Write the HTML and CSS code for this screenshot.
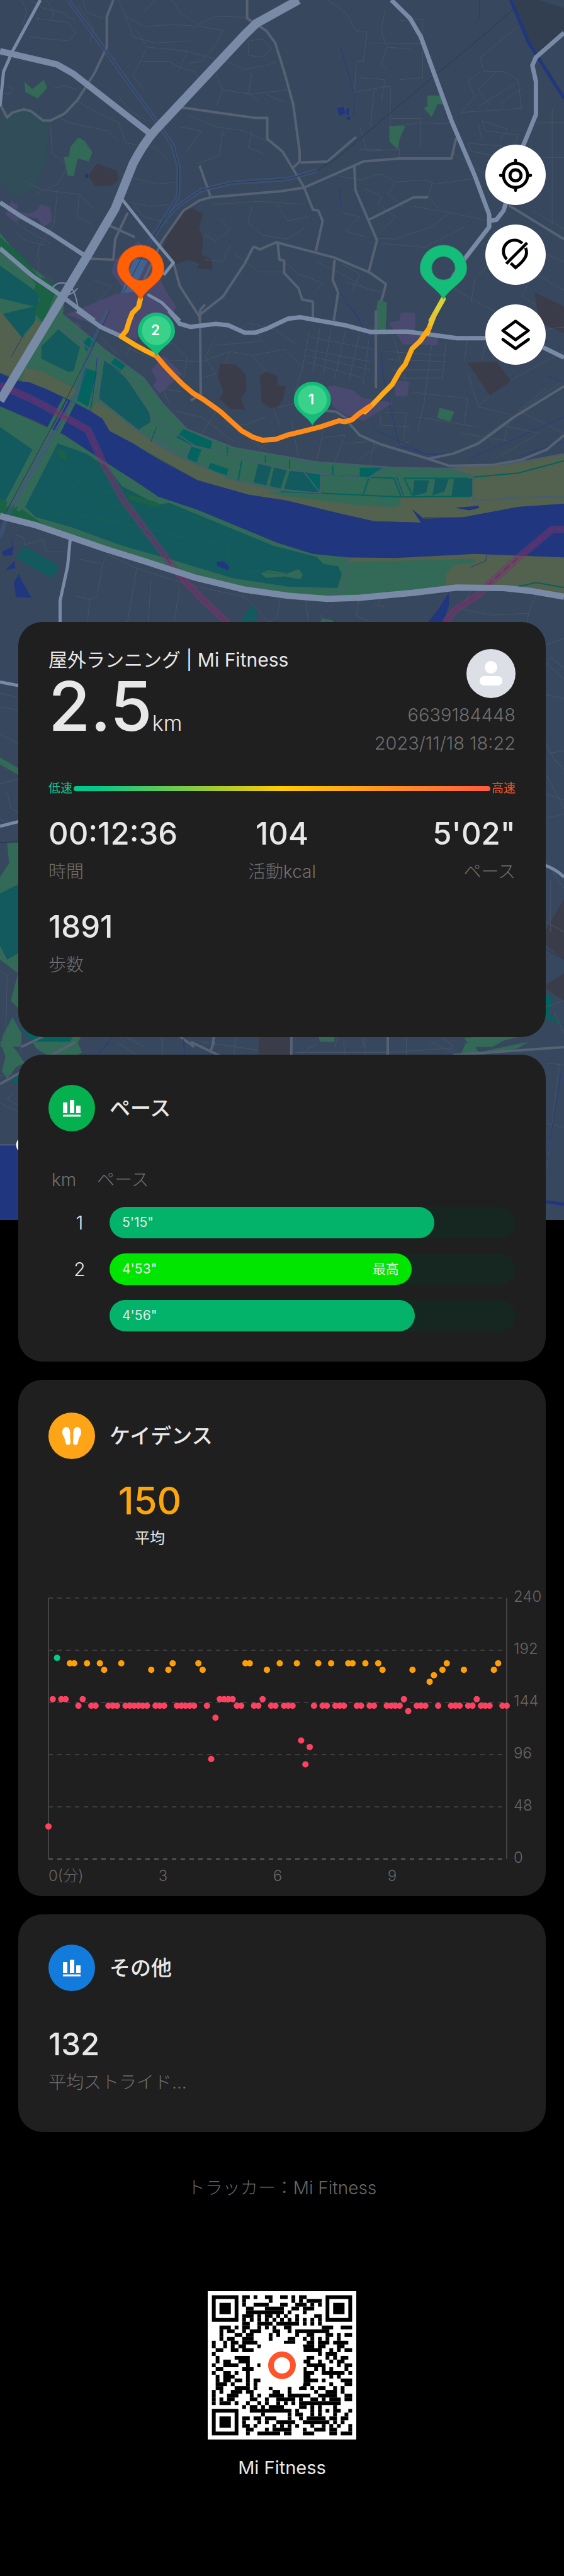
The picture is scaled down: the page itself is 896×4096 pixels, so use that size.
FILE: index.html
```html
<!DOCTYPE html>
<html lang="ja">
<head>
<meta charset="utf-8">
<meta name="viewport" content="width=device-width, initial-scale=1">
<title>屋外ランニング | Mi Fitness</title>
<link rel="stylesheet" href="styles.css">
</head>
<body>
<main class="page">
  <svg class="map" viewBox="0 0 1125 2436" role="img" aria-label="ランニングルートの地図">
    <rect class="land" width="1125" height="2436"/>

    <!-- northern town -->
    <g transform="scale(.7175 .4082)">
      <path class="forest" d="M10 560Q70 500 135 580L130 790L95 920L40 970L0 890V600Z"/>
      <path class="grass" d="M68 400L90 435L122 390L131 430L105 482L70 450ZM218 672L236 690L257 745L247 790L216 775L205 862L188 858L177 768L192 765L195 720ZM1188 467H1228L1236 512L1217 508L1200 572L1178 530L1188 520ZM1082 615H1127L1112 675L1106 730L1090 705L1082 690Z"/>
      <path class="dark" d="M270 800L325 835L330 880L310 908L265 912L245 860ZM535 1018L565 1045L553 1110L565 1170L560 1245L590 1270V1320L548 1310L555 1290L525 1270L485 1295L450 1230L470 1130L505 1035Z"/>
      <path class="shade" d="M1428 0H1500L1568 40V170L1495 260L1470 200L1440 90Z"/>
      <path class="block" d="M30 990L50 1000L48 1030L80 1045L100 1030L115 1000L140 1015L144 1085L120 1110L105 1070L75 1060L40 1085L15 1050ZM385 1180L400 1200L460 1420L490 1500L470 1568H330L350 1430L310 1330L320 1270Z"/>
      <path class="street" d="M60 0L75 60L60 130M85 0L120 40L170 60L210 100M100 90L190 110L210 160L190 200L80 180M130 0L150 60L140 100M230 0L240 60L290 90M220 30L260 140L250 210M330 0L350 80L400 130L480 120L560 130L620 150M350 80L370 180L430 210L530 200M400 60L430 0M480 0L500 60L550 120L600 80L690 85M380 150L410 230L520 250L600 290M410 230L390 300L370 370L400 440M520 250L500 330L540 350L560 400M390 300L470 300L500 330M620 150L600 220L560 300L520 310M690 200L730 190L755 240L730 280L690 270ZM630 300L680 340L740 320L770 300M600 360L620 440L700 460L800 440M620 440L600 520M700 360L690 450L720 500M740 460L790 500M20 420L35 430L30 455L0 460M150 430L180 420L215 440M160 570L190 600L300 640L330 690M220 500L270 550L330 600L350 700M330 470L360 540L410 590M140 600L145 750L190 810L160 900L100 950M60 880L120 930L220 950L260 1020M160 930L150 1100L110 1200L100 1290M220 950L215 1060L260 1100M30 970L50 1100L140 1190M350 700L430 720L470 790M370 870L440 900L490 890M360 990L420 1010L470 1000M520 560L600 620L680 640L740 690M500 620L560 640L520 740M620 640L610 760L550 800M700 640L690 720L740 760M590 1000L720 985L850 1000M610 1070L640 1120L600 1180L570 1150M700 1010L690 1090L730 1150L800 1170M770 1000L800 1080L860 1060M640 1200L620 1280L570 1270M800 1170L850 1110"/>
      <path class="street" d="M910 0L960 60L990 150L1020 155L1010 300L990 300L985 470M1070 50L1060 150L1075 230L1060 310L1080 350M1110 100L1175 95V380L1110 390M1030 210L1180 215M1075 230L1140 240M990 450L1085 420V620L1170 600M1040 430L1030 620M1000 380L1070 390L1060 500M1090 580H1170V730M1000 620L1020 740L1110 730V770M1170 600L1230 605L1260 600M1000 730L1060 730M1335 280L1345 350L1400 350L1440 390L1450 530L1280 550M1335 350L1300 400L1320 470L1280 560M1380 350L1330 440L1360 510M1440 400L1330 520M1450 430L1390 510L1400 530M1340 590L1350 640L1440 660L1430 720L1300 700M1340 590L1410 630L1390 690M1300 700L1310 740L1370 760L1360 830L1450 900M1440 130L1330 290M1490 600H1568M1510 770H1568M1390 700L1395 830M940 860L1000 880L1060 850L1100 890L1180 880L1210 900L1330 870M1010 920L1060 960L1050 1010M1100 890L1080 950L1120 1010M1200 900L1190 960L1220 1020M1060 1010L1100 1060L1060 1130M1150 1010L1250 1040L1360 1080M1250 1040L1200 1110L1100 1170L1040 1165M950 1040L1000 1060L960 1130L1020 1160M1290 1110L1180 1210L1060 1190M1370 1130L1568 1280M1340 1190L1568 1420M1400 1230L1480 1350L1450 1450L1560 1560M1380 1260L1320 1360L1310 1480M1240 1390L1330 1480L1420 1568M1480 1030L1568 1120M1535 530V1100M880 1280L940 1330L1010 1400M950 1290L1000 1340L980 1420M960 1380L1060 1430M900 1380L870 1440M790 1280L830 1340L890 1380M650 1240L720 1330L790 1330M110 1260L105 1330L150 1380M40 1130L75 1180L130 1200M260 1370L310 1400L270 1480M370 1000L400 1060L470 1090M1330 600L1340 690M1260 750L1390 900"/>
      <path class="road" d="M315 0L297 80V230L262 360L215 490L180 555L140 590H120L85 542L65 535L35 550L20 575L0 510M687 0V90L740 150L765 210L790 350L815 510L833 740V790L815 820M505 525L600 550L710 577H743V680L785 740L845 915L870 1025L885 1030L897 1080L878 1228M835 795L910 790L990 670M585 965L780 935L845 918L1010 790L1110 775H1255L1268 675M585 965L555 980L510 1030L450 1180L400 1370M985 810L988 930L1048 1175L1025 1330M1025 1075L1150 965H1190M705 1205L722 1220L768 1185L930 1260L1030 1335L1073 1390L1045 1568M705 1205L680 1290L620 1450L555 1540M772 1190L777 1270L790 1275V1335L830 1410L840 1465L870 1475V1568M930 1270L925 1370L940 1430L928 1568M482 1285L500 1400L555 1550V1568M1415 1005L1568 1170M555 810L585 960M250 1265L315 1270L320 1170L355 1040M300 1100L375 1160"/>
      <path class="stream" d="M947 230L985 460L983 560M942 915L948 1020M1333 0V90M940 1420L1000 1568"/>
      <path class="canal" d="M1420 0L1470 210L1510 320L1568 480"/>
      <path class="water" d="M937 530L955 522L960 555L944 566ZM963 530H970V562H963ZM963 575L970 568L976 582L965 588ZM237 850H245V870H236Z"/>
      <path class="rail-bed" d="M190 0L290 240L400 510L440 605L480 710L497 820L495 960L460 1060L425 1165M880 835L800 875L640 895L560 930L500 1000L460 1070L420 1170L350 1410L290 1568"/>
      <path class="station" d="M372 1265L410 1275L350 1505L325 1490Z"/>
      <path class="rail" d="M190 0L290 240L400 510L440 605L480 710L497 820L495 960L460 1060L425 1165M1455 0L1340 180L1215 360L1050 605L940 770L880 835L800 875L640 895L560 930L500 1000L460 1070L420 1170L350 1410L290 1568"/>
      <path class="main-road w6" d="M112 0L35 250L10 350L0 520M335 965L425 1165L482 1285L455 1345M410 1440L450 1480L500 1568"/>
      <path class="main-road w8" d="M1088 0L1140 90L1170 180L1205 350L1255 590L1320 860L1360 1050V1110L1290 1270L1230 1440M1568 160L1490 280L1480 320L1490 400V560L1455 710L1400 1030L1380 1075L1362 1080M0 990L60 1060L140 1140L240 1255"/>
    </g>

    <!-- river and parks -->
    <g transform="translate(0 620) scale(.7175 .4082)">
      <path class="grass" d="M0 -380L60 -250L125 -160L180 -70L175 20L290 190L400 330L450 450L520 580L650 670L880 740L1100 768L1250 772L1400 755L1568 700V945L1440 960L1290 1010H1180L1040 1030L800 930L550 830L305 590L190 435L0 305Z"/>
      <path class="grass" d="M0 468L180 610L390 850L550 975L770 1135L870 1190L970 1207L1320 1190L1568 1207V1400L1400 1355H1270L1080 1400L910 1410L680 1365L400 1225L100 1050L0 1005Z"/>
      <path class="park" d="M0 -290L50 -200L110 -70L95 60L60 130L0 80Z"/>
      <path class="forest-deep" d="M0 -360L70 -250L110 -160L125 -160L160 -110L120 60L95 10L112 -60L60 -200L0 -310Z"/>
      <path class="grass" d="M0 -320L100 -130L95 -100L0 -220ZM0 -60L95 -20L0 20Z"/>
      <path class="scrub" d="M0 0L65 140L100 45L118 70L45 330L0 305ZM70 280L120 300L215 390L190 435L130 385L60 345ZM270 445L300 480L420 640L500 720L650 830L780 885L1000 905H1310L1320 810L1250 772L1400 755L1568 700V945L1440 960L1290 1010H1180L1170 1037L1040 1030L950 995L800 930L690 900L550 830L370 650L305 590L250 490Z"/>
      <path class="grass" d="M740 885L1110 915L1115 950L1090 963L990 950L780 905ZM1310 805L1250 772L1030 770L900 900L1310 908Z"/>
      <path class="park" d="M162 92L222 180L205 295L190 300L115 235V175ZM290 240L350 330L415 500L418 545L385 583L275 430ZM718 750L755 765L740 855L705 840ZM762 768L797 782L780 870L750 857ZM805 785L845 790L880 890L790 872ZM1152 830H1193L1185 890L1147 908ZM1210 825H1247L1235 885L1202 905ZM1262 825L1313 822V905L1255 910Z"/>
      <path class="turf" d="M250 120L270 150L240 200L230 160ZM320 230L350 265L335 300L305 265ZM235 280L270 300L245 470L215 440ZM510 580L590 640L585 680L530 655L490 620ZM530 665L560 680L545 750L520 725ZM585 745L635 775L630 805L578 775ZM845 790L890 800L888 890L870 880ZM1000 770L1065 768L1030 815L1000 808Z"/>
      <path class="park" d="M160 650L240 700L300 770L340 860L440 950L470 940L760 1150L880 1205L900 1240L940 1250L950 1290L938 1357L800 1350L650 1310L480 1220L340 1150L200 1060L100 1010L70 960ZM0 570L90 680L15 930L0 920Z"/>
      <path class="wood" d="M155 675L180 690L190 740L165 715ZM350 895L440 940V965L360 925ZM0 920L60 970L120 1045L0 985Z"/>
      <path class="grass" d="M725 1285L745 1270L800 1285L830 1265L842 1290L835 1315L790 1300L740 1308Z"/>
      <path class="scrub" d="M965 1210L1320 1190L1568 1207V1400L1400 1355H1240V1290L1260 1245L1320 1235V1215L970 1230Z"/>
      <path class="park" d="M65 1150L165 1250L145 1310L45 1210ZM700 1440L718 1480L700 1568H650Z"/>
      <path class="water" d="M0 305L40 345L80 350L130 385L190 435L250 490L285 530L305 590L370 650L450 740L550 830L690 900L800 930L950 995L1040 1030L1170 1037L1130 930L1145 970L1180 1020L1290 1010L1440 960L1568 945V1207L1320 1190L1100 1210L970 1207L870 1190L770 1135L550 975L440 910L390 850L270 715L180 610L100 540L0 468ZM5 1180L35 1155V1195L10 1200ZM15 1270L40 1225L43 1260ZM38 1330L52 1290L60 1320L88 1405L45 1400ZM602 1230L620 1225L637 1250L635 1270L605 1250ZM1248 1380V1440L1225 1568H1170L1215 1470ZM1265 965L1330 955L1333 965L1305 977Z"/>
      <path class="dark" d="M612 260L655 265L683 310L685 390L670 430L682 485L640 480L610 430L622 400L605 320ZM740 297L770 320L772 365L795 370L785 440L765 490L728 450L722 320ZM1300 255L1380 250L1420 345L1362 415ZM1485 -90L1568 -20V110L1500 60Z"/>
      <path class="block" d="M455 220L508 310L480 350L445 405L425 370L435 340L420 290ZM910 370L935 370L980 390L1010 430L1095 450L1010 540L960 510L925 470ZM1095 340L1138 350L1132 420L1100 420ZM1080 60L1110 50L1115 10H1155V120L1217 130V170L1120 165ZM185 20L320 -80L400 -100L420 0L380 140L340 130L300 90ZM205 50L230 80L215 80Z"/>
      <path class="grass" d="M1050 -50L1076 -40L1072 95L1040 90ZM1222 475L1263 495L1252 542L1215 525ZM895 1505L925 1515V1568H880Z"/>
      <path class="street" d="M350 180L430 240L560 250M380 130L350 220M440 180L480 160L520 230L510 330M560 250L640 200L700 220L790 190L850 290M600 130L570 230L600 310L560 330M600 170L730 150L700 80M640 200L625 260M660 100L690 60L760 90L820 160M700 220L740 300M850 190L1030 250M850 220L1030 290M860 130L1040 190M850 250L1010 330M860 100L840 290L820 400M890 80L870 300M920 90L900 310M960 100L930 330M1000 110L970 340M1030 80L1010 360M1070 200L1240 220M1080 240L1240 250M1090 290L1230 290M1100 330L1230 330M1090 100L1130 360M1200 170L1180 440L1160 600M1240 140L1230 340M1150 400L1300 430L1290 560M1160 520L1330 570M780 570L760 480L850 440M740 520L680 560L620 540M810 540L830 720M850 600L900 580L880 740M900 620L960 610L930 740M960 650L1040 640L1030 740M1050 440L1060 560L1140 570M1070 500L1130 500L1120 640M1000 610L1050 660L990 740M1140 640L1100 660M560 440L600 500L560 600M480 490L560 520L650 640M700 640L750 690M770 620L720 680M1300 300L1330 470L1420 510L1400 640M1360 420L1330 470M1280 600L1420 640M1420 340L1568 200M1568 340L1320 650M1520 380L1440 490L1568 600M1390 560L1500 600L1380 720M1300 140L1290 250M1350 150L1340 240M1420 200L1480 100L1568 80M330 220L280 130M470 450L450 380L510 400"/>
      <path class="street" d="M40 1095L65 1110L70 1145L120 1120L130 1180H185M220 1215L285 1240L300 1195L380 1260L520 1340L680 1400L740 1510L760 1568M285 1240L270 1400L250 1410L240 1568M380 1260L350 1568M210 1395L250 1415M500 1350L480 1568M780 1400L770 1500L700 1568M850 1410L860 1568M940 1410L890 1500L960 1568M1000 1400L990 1490L1080 1568M1060 1400L1050 1440L1070 1450M1310 1370L1280 1460L1370 1490L1470 1480L1460 1568M1490 1390L1470 1480M420 1310L410 1568"/>
      <path class="teal-line" d="M632 665V710M738 710V750M805 730V780M672 735L662 835M925 757V803M1025 820L1010 900M892 803L1095 820L1115 910M1120 820H1300M1125 825L1147 905M780 885L1115 912L1310 908M1315 815L1440 795L1568 735M1440 1350L1490 1330L1568 1355"/>
      <path class="trail" d="M175 20L290 190L400 330L450 450L520 580L650 670L880 740L1100 768L1250 772L1400 755L1568 700M150 60L250 190L290 240L360 320L430 530L540 660L800 775L892 800V892L780 880L640 825L440 660L275 440V230L205 120M892 800L1025 818L1065 770M1310 805L1250 772M1315 805V930L1500 910L1568 912M830 730L880 775L892 800M430 640L470 690L530 665L515 730M890 890L845 790M970 1215L955 1370L910 1395"/>
      <path class="park-path" d="M150 830L90 970L200 1000L350 1040L480 1100L640 1150L630 1200L660 1270L800 1290M170 740L180 800L280 880L380 930L350 1040M190 850L330 960L480 960L640 1100"/>
      <ellipse class="trail" cx="456" cy="640" rx="12" ry="22"/>
      <path class="stream" d="M270 230L265 330L252 490M65 120L30 230M435 570L420 640M985 0L1040 190L1060 210L1065 320L1110 660L1190 705L1240 700M1035 575L1180 700M1568 520L1305 725M1568 640L1450 710M1355 1185L1350 1225L1308 1255M1102 812L1122 905M30 1110L38 1170M1520 320L1568 350"/>
      <path class="rail-bed" d="M300 0L255 170L215 400L165 560L20 1000L0 1110"/>
      <path class="scrub-line" d="M180 430L20 960M205 450L50 980"/>
      <path class="trail" d="M188 440L30 960M198 445L40 965"/>
      <path class="rail" d="M305 0L255 190L165 500L0 1040"/>
      <path class="border" d="M0 365L90 435L170 510L245 585L285 740L340 920L490 1275L550 1390L640 1540M1568 1070H1535L1440 1210L1370 1320L1330 1390L1265 1465L1235 1530"/>
      <path class="border-line" d="M0 365L90 435L170 510L245 585L285 740L340 920L490 1275L550 1390L640 1540M1568 1070H1535L1440 1210L1370 1320L1330 1390L1265 1465L1235 1530"/>
      <path class="road" d="M556 0L558 410L530 440M1045 0V380M965 540L1000 610L1060 655L1190 725L1260 700L1330 650L1430 520L1568 370M1190 725L1250 760L1370 755L1450 730L1520 680L1568 610M905 490L935 495L965 530M555 0L570 -30"/>
      <path class="main-road w8" d="M470 0L500 65L530 80L600 65L635 72L680 108H710L740 90L800 40L835 33L960 72L1030 105L1130 103L1200 118L1270 135H1350M1510 180L1568 230M215 0L280 80L335 125"/>
      <path class="main-road w6" d="M195 1120L188 1250L167 1420V1568"/>
      <path class="main-road w11" d="M0 1005L100 1050L300 1170L400 1225L540 1305L680 1365L800 1395L910 1410L1000 1405L1150 1380L1270 1355L1400 1357L1470 1370L1568 1400"/>
    </g>

    <g transform="scale(.7175 .4082)">
      <path class="main-road w11" d="M0 250L158 315L205 362L415 650"/>
      <path class="main-road w8" d="M0 1215L90 1350L165 1440L262 1568"/>
      <path class="main-road w14" d="M830 0L712 115L680 170L430 640Q400 700 370 800L320 1020L240 1260L0 1960"/>
      <path class="ramp" d="M145 1410Q160 1370 190 1390Q210 1420 216 1500M188 1380L175 1430Q190 1460 216 1410"/>
    </g>

    <!-- suburbs beside the cards -->
    <g transform="translate(0 1230) scale(.7175 .5485)">
      <path class="grass" d="M0 515L60 560V585L0 540ZM20 825H60V1440L30 1400L50 1300L0 1250V950L25 900ZM10 1520L35 1460L60 1520V1568H0ZM85 1500L230 1520L210 1568H120ZM1290 1535L1310 1568H1370L1400 1545L1480 1520H1450Z"/>
      <path class="park" d="M0 1010L60 970V1220L20 1250L0 1200Z"/>
      <path class="turf" d="M60 1500H210L190 1568H100ZM1500 1380H1530L1535 1400L1525 1450L1568 1490L1510 1460Z"/>
      <path class="dark" d="M1568 1030L1500 1180L1568 1250ZM722 1530H810V1568H718ZM1568 1300L1510 1350L1568 1400Z"/>
      <path class="grass" d="M885 1530H930V1550H890Z"/>
      <path class="street" d="M0 280L60 300M0 330L60 345M0 430L60 470M0 610L60 590M20 640L30 700L60 720M0 740L60 760M1510 110L1568 80M1518 170L1568 230M1530 150L1568 190M1500 280L1568 300M1500 420L1540 520L1568 560M1525 500L1568 490M1520 580L1568 700M1500 640L1568 670M1500 740L1568 720M1500 860L1568 990M1500 1100L1568 1150M1530 960V1150M1500 1430L1568 1400M1540 1440L1568 1520M0 1290L20 1310L15 1568M350 1530L400 1568M450 1530V1568M660 1530L650 1568M940 1530L930 1568M1010 1530V1568M1130 1530V1568M1230 1530L1260 1568"/>
      <path class="rail" d="M0 825L60 820M1500 1200L1568 1250"/>
      <path class="main-road w6" d="M0 240L60 255M0 765L60 745M1510 905Q1545 920 1568 950"/>
      <path class="road" d="M60 1568L120 1530M500 1530L540 1568M595 1530L590 1568M810 1530V1568M1078 1530V1568"/>
      <path class="stream" d="M312 1530L290 1568M510 1540V1568"/>
    </g>
    <g transform="translate(0 2080) scale(.7175 .4209)">
      <path class="grass" d="M20 0L45 40L68 100L45 120L20 175L5 140L15 70L0 0ZM90 0H215L228 50L215 62H130L100 30ZM1295 5L1318 10L1330 50L1440 10L1470 0L1440 30L1340 62H1280Z"/>
      <path class="turf" d="M30 180L60 160V210L40 195Z"/>
      <path class="dark" d="M722 0H808L804 70H716Z"/>
      <path class="street" d="M0 160L60 150M0 290L50 330M40 240L20 270L50 300M57 0L58 60M325 0L385 70M452 0V70M560 0L720 40M655 10L650 70M820 50H1080L1260 30M880 10L840 50V70M955 0L960 70M1015 0V70M1130 0V70M1195 0L1260 50M1450 0V20M1568 110L1518 100M1520 385L1568 405M1555 100L1520 600"/>
      <path class="road" d="M530 0L610 65M595 0L585 45M810 0V65M1078 0V65M1260 62L1568 25M0 200L210 0"/>
      <path class="stream" d="M305 0L270 65M512 0V65M1560 150L1520 560"/>
      <path class="water" d="M0 492H60V845H0Z"/>
      <path class="trail" d="M0 488H60"/>
      <path class="canal" d="M1518 758L1568 770"/>
      <ellipse cx="55" cy="489" rx="10" ry="28" fill="#fff"/>
    </g>

    <!-- route -->
    <g class="route">
      <path stroke="#d8d23a" d="M884 597L860 640"/>
      <path stroke="#e8c32c" d="M867 627L852 665"/>
      <path stroke="#ffa912" d="M854 660L838 690L818 735L797 782L780 813L762 849L742 888L728 812M280 597L276 613L264 625L258 640L252 660L242 672L268 688L290 700L308 711" visibility="hidden"/>
      <path stroke="#ffa912" d="M856 655L838 681L822 696L808 728L798 740L782 768L760 790L742 809L728 822M280 597L276 613L264 625L258 640L252 660L242 672L268 688L290 700L312 711"/>
      <path stroke="#ff8a18" d="M738 811L716 826L702 838L688 842L676 840L640 852L600 862L575 868L550 877L524 879L505 873L482 860L462 842L440 822L425 811L405 797L385 785L365 768L345 748L328 730L312 711"/>
    </g>
    <path fill="#ff5f05" stroke="#d84e12" fill-rule="evenodd" d="M280.500 598C266 573 234 562 234 536A46.500 46.500 0 1 1 327 536C327 562 295 573 280.500 598ZM280.500 513A23.500 23.500 0 1 0 280.500 560A23.500 23.500 0 1 0 280.500 513Z"/>
    <path fill="#14bd79" stroke="#2a9b6b" fill-rule="evenodd" d="M884.500 597C870 572 838 562 838 536A46.500 46.500 0 1 1 931 536C931 562 899 572 884.500 597ZM884.500 512A23.500 23.500 0 1 0 884.500 559A23.500 23.500 0 1 0 884.500 512Z"/>
    <g>
      <path fill="#14bd79" d="M312 711C302 692 275 684 275 661A37 37 0 1 1 349 661C349 684 322 692 312 711Z"/>
      <circle cx="312" cy="660" r="29" fill="#3ad28b"/>
      <text class="pin-text" x="310" y="669">2</text>
      <path fill="#14bd79" d="M623 849C613 830 586 822 586 799A37 37 0 1 1 660 799C660 822 633 830 623 849Z"/>
      <circle cx="623" cy="798" r="29" fill="#3ad28b"/>
      <text class="pin-text" x="621" y="807">1</text>
    </g>
  </svg>

  <nav class="controls" aria-label="地図の操作">
    <button class="control" type="button" aria-label="現在地">
      <svg viewBox="0 0 360 360" fill="none" stroke="#000" stroke-width="18" stroke-linecap="round"><circle cx="180" cy="183" r="72"/><circle cx="180" cy="183" r="33"/><path d="M180 93V110M180 256V273M90 183H107M253 183H270"/></svg>
    </button>
    <button class="control" type="button" aria-label="ピンを隠す">
      <svg viewBox="0 0 360 360" fill="none" stroke="#000" stroke-width="18"><path d="M128 207A66 66 0 0 1 220 112M240 139Q253 171 236 199Q218 229 180 257L152 231M125 234L249 109"/></svg>
    </button>
    <button class="control" type="button" aria-label="レイヤー">
      <svg viewBox="0 0 360 360" fill="none" stroke="#000" stroke-width="18" stroke-linejoin="round" stroke-linecap="round"><path d="M180 100L256 156L180 211L105 156Z"/><path d="M105 209L180 264L257 209"/></svg>
    </button>
  </nav>

  <section class="card summary">
    <header class="summary-head">
      <div>
        <h1 class="title">屋外ランニング | Mi Fitness</h1>
        <p class="distance">2.5<span class="unit">km</span></p>
      </div>
      <div class="user">
        <svg class="avatar" viewBox="0 0 78 78" aria-hidden="true"><circle cx="39" cy="39" r="39" fill="#dcdfe5"/><circle cx="39" cy="29" r="10" fill="#fff"/><rect x="21" y="43" width="36" height="15" rx="7" fill="#fff"/></svg>
        <p>6639184448</p>
        <p>2023/11/18 18:22</p>
      </div>
    </header>
    <div class="speed">
      <span class="slow">低速</span><span class="speed-bar"></span><span class="fast">高速</span>
    </div>
    <dl class="stats">
      <div class="stat"><dd>00:12:36</dd><dt>時間</dt></div>
      <div class="stat"><dd>104</dd><dt>活動kcal</dt></div>
      <div class="stat"><dd>5'02"</dd><dt>ペース</dt></div>
      <div class="stat"><dd>1891</dd><dt>歩数</dt></div>
    </dl>
  </section>

  <section class="card pace">
    <header class="card-head">
      <svg class="badge" viewBox="0 0 74 74" aria-hidden="true"><circle cx="37" cy="37" r="37" fill="#04b14e"/><path fill="#fff" d="M23 29q0-1 1-1h5q1 0 1 1v16h-7zM34 25q0-1 1-1h5q1 0 1 1v20h-7zM44 34q0-1 1-1h5q1 0 1 1v11h-7zM23 47.500h28v3H23z"/></svg>
      <h2>ペース</h2>
    </header>
    <table class="laps">
      <thead><tr><th class="lap-km">km</th><th>ペース</th></tr></thead>
      <tbody>
        <tr><td class="lap-no">1</td><td><div class="track"><div class="fill" style="width:80%"><span>5'15"</span></div></div></td></tr>
        <tr><td class="lap-no">2</td><td><div class="track"><div class="fill best" style="width:74.4%"><span>4'53"</span><span>最高</span></div></div></td></tr>
        <tr><td class="lap-no"></td><td><div class="track"><div class="fill" style="width:75.2%"><span>4'56"</span></div></div></td></tr>
      </tbody>
    </table>
  </section>

  <section class="card cadence">
    <header class="card-head">
      <svg class="badge" viewBox="0 0 74 74" aria-hidden="true"><circle cx="37" cy="37" r="37" fill="#fda417"/><path fill="#fff" d="M28 23C33 23 35 29 34.500 35C34 39 35 44 35 48C35 52 29 53 27.500 49C26 43 26 41 23.500 37C20 31 23 23 28 23ZM46 23C41 23 39 29 39.500 35C40 39 39 44 39 48C39 52 45 53 46.500 49C48 43 48 41 50.500 37C54 31 51 23 46 23Z"/></svg>
      <h2>ケイデンス</h2>
    </header>
    <div class="average"><strong>150</strong><span>平均</span></div>
    <svg class="chart" id="cadence-chart" viewBox="0 0 838 480" role="img" aria-label="ケイデンスのグラフ"></svg>
  </section>

  <section class="card other">
    <header class="card-head">
      <svg class="badge" viewBox="0 0 74 74" aria-hidden="true"><circle cx="37" cy="37" r="37" fill="#137bdc"/><path fill="#fff" d="M23 29q0-1 1-1h5q1 0 1 1v16h-7zM34 25q0-1 1-1h5q1 0 1 1v20h-7zM44 34q0-1 1-1h5q1 0 1 1v11h-7zM23 47.500h28v3H23z"/></svg>
      <h2>その他</h2>
    </header>
    <dl class="stats"><div class="stat"><dd>132</dd><dt>平均ストライド…</dt></div></dl>
  </section>

  <footer class="footer">
    <p class="tracker">トラッカー：Mi Fitness</p>
    <svg class="qr" id="qr" viewBox="0 0 392 392" role="img" aria-label="Mi Fitness QRコード"></svg>
    <p class="brand">Mi Fitness</p>
  </footer>
</main>
<script src="app.js"></script>
</body>
</html>
```
FILE: styles.css
```css
* { box-sizing: border-box; }

body {
  margin: 0;
  background: #000;
  color: #e8e8e8;
  font-family: Inter, "Noto Sans CJK JP", sans-serif;
  font-weight: 400;
}

h1, h2, p, dl, dd, dt { margin: 0; font-weight: inherit; }

.page {
  position: relative;
  padding: 230px 29px 0;
}

/* map */
.map {
  position: absolute;
  top: 0;
  left: 0;
  width: 100%;
  z-index: -1;
}
.map path, .map ellipse { vector-effect: non-scaling-stroke; }
.land { fill: #37475d; }
.forest { fill: #304d59; }
.forest-deep { fill: #1b6144; }
.grass { fill: #336957; }
.park { fill: #125a5d; }
.turf { fill: #02635f; }
.wood { fill: #1b6144; }
.scrub { fill: #53614f; }
.dark { fill: #3a3d49; }
.shade { fill: #313f50; }
.block { fill: #4a4a70; }
.station { fill: #42638f; }
.water { fill: #20367f; }
.street { fill: none; stroke: #485466; stroke-width: 1px; }
.road { fill: none; stroke: #566273; stroke-width: 4px; stroke-linejoin: round; }
.main-road { fill: none; stroke: #788aa5; stroke-linejoin: round; }
.w6 { stroke-width: 5px; }
.w8 { stroke-width: 7px; }
.w11 { stroke-width: 10px; }
.w14 { stroke-width: 14px; }
.ramp { fill: none; stroke: #788aa5; stroke-width: 2px; }
.stream { fill: none; stroke: #243c83; stroke-width: 1px; }
.canal { fill: none; stroke: #20367f; stroke-width: 5px; }
.rail-bed { fill: none; stroke: #3f5883; stroke-width: 7px; opacity: .5; }
.rail { fill: none; stroke: #2a384f; stroke-width: 1px; }
.trail { fill: none; stroke: #475d70; stroke-width: 2px; }
.teal-line { fill: none; stroke: #02635f; stroke-width: 2px; }
.park-path { fill: none; stroke: #1b6150; stroke-width: 1px; }
.scrub-line { fill: none; stroke: #336957; stroke-width: 6px; }
.border { fill: none; stroke: #71396d; stroke-width: 12px; opacity: .5; }
.border-line { fill: none; stroke: #7d2568; stroke-width: 2px; stroke-dasharray: 12 6; }
.route { fill: none; stroke-width: 8px; stroke-linejoin: round; stroke-linecap: round; }
.pin-text { fill: #fff; font-size: 28px; font-weight: 600; text-anchor: middle; }

.controls {
  display: flex;
  flex-direction: column;
  align-items: flex-end;
  gap: 31px;
  margin-bottom: 409px;
}
.control {
  width: 96px;
  height: 96px;
  padding: 0;
  border: 0;
  border-radius: 50%;
  background: #fff;
}
.control svg { display: block; width: 100%; }

/* cards */
.card {
  margin-bottom: 29px;
  padding: 48px;
  border-radius: 38px;
  background: #1f1f1f;
}
.card-head { display: flex; align-items: center; gap: 23px; }
.card-head h2 { font-size: 33px; line-height: 48px; font-weight: 500; }
.badge { width: 74px; height: 74px; }

.summary { margin-bottom: 28px; padding-top: 36px; padding-bottom: 95px; }
.summary-head { display: flex; justify-content: space-between; align-items: flex-start; }
.title { font-size: 30px; line-height: 48px; }
.distance {
  display: flex;
  align-items: baseline;
  gap: 0;
  font-size: 108px;
  line-height: 100px;
  font-weight: 500;
}
.unit { font-size: 34px; font-weight: 300; }
.user {
  display: flex;
  flex-direction: column;
  align-items: flex-end;
  padding-top: 7px;
  color: #6f6f6f;
  font-size: 29px;
  line-height: 45px;
  font-weight: 300;
}
.avatar { width: 78px; height: 78px; margin-bottom: 4px; }

.speed {
  display: flex;
  align-items: center;
  gap: 2px;
  margin-top: 36px;
  font-size: 19px;
  line-height: 28px;
}
.slow { color: #12c48b; }
.fast { color: #f0592a; }
.speed-bar {
  flex: 1;
  height: 8px;
  border-radius: 4px;
  background: linear-gradient(90deg, #00c98d 5%, #ffcc00 50%, #ff5c41);
}

.stats {
  display: grid;
  grid-template-columns: repeat(3, 1fr);
  row-gap: 38px;
  margin-top: 28px;
}
.stat { display: flex; flex-direction: column; }
.stat:nth-child(3n + 2) { align-items: center; }
.stat:nth-child(3n) { align-items: flex-end; }
.stat dd { font-size: 49px; line-height: 60px; font-weight: 500; }
.stat dt {
  padding-top: 10px;
  color: #6f6f6f;
  font-size: 28px;
  line-height: 40px;
  font-weight: 300;
  white-space: nowrap;
}

.laps {
  width: 100%;
  margin-top: 53px;
  border-collapse: collapse;
}
.laps th {
  padding: 0 0 19px;
  color: #6f6f6f;
  font-size: 28px;
  line-height: 48px;
  font-weight: 300;
  text-align: left;
}
.laps th.lap-km { width: 77px; padding-left: 5px; }
.laps td { padding: 0 0 24px; }
.laps td.lap-no { padding-left: 22px; text-align: center; font-size: 30px; font-weight: 300; }
.laps td + td { padding-left: 20px; }
.track { border-radius: 25px; background: #152720; }
.fill {
  display: flex;
  justify-content: space-between;
  padding: 0 20px;
  border-radius: 25px;
  background: #03b36a;
  font-size: 21px;
  line-height: 50px;
}
.fill.best { background: #00e600; }
.pace { padding-bottom: 24px; }

.cadence { padding: 52px 0 14px; }
.cadence .card-head { padding: 0 48px; }
.average {
  display: flex;
  flex-direction: column;
  align-items: center;
  width: 160px;
  margin: 30px 0 0 129px;
}
.average strong { color: #fba60c; font-size: 60px; line-height: 72px; font-weight: 500; }
.average span { font-size: 24px; line-height: 48px; }
.chart { display: block; width: 100%; margin-top: 51px; overflow: visible; }
.axis { stroke: #444; stroke-width: 2; }
.grid { stroke: #3c3c3c; stroke-width: 2; stroke-dasharray: 7 7; }
.grid.base { stroke: #5a5a5a; }
.label { fill: #666; font-size: 24px; font-weight: 300; }
.label.mid { text-anchor: middle; }

.other { padding-bottom: 59px; }
.other .stats { margin-top: 55px; }

.footer {
  display: flex;
  flex-direction: column;
  align-items: center;
  padding: 40px 0 148px;
  font-size: 28px;
  line-height: 40px;
}
.tracker { color: #666; font-weight: 300; }
.qr { width: 236px; margin: 144px 0 25px; background: #fff; }
.brand { font-size: 29px; }
```
FILE: app.js
```js
const NS = "http://www.w3.org/2000/svg";

function add(parent, tag, attrs, text) {
  const el = document.createElementNS(NS, tag);
  for (const key in attrs) el.setAttribute(key, attrs[key]);
  if (text) el.textContent = text;
  parent.appendChild(el);
}

/* cadence samples as [value, run length] */
const samples = [
  [30, 1], [147, 1], [185, 1], [147, 2], [180, 2], [141, 1], [147, 1], [180, 1],
  [141, 2], [180, 1], [174, 1], [141, 3], [180, 1], [141, 6], [174, 1], [141, 3],
  [174, 1], [180, 1], [141, 5], [180, 1], [174, 1], [141, 1], [92, 1], [130, 1],
  [147, 4], [141, 2], [180, 2], [141, 2], [147, 1], [174, 1], [141, 2], [180, 1],
  [141, 3], [180, 1], [109, 1], [87, 1], [103, 1], [141, 1], [180, 1], [141, 2],
  [180, 1], [141, 3], [180, 2], [141, 2], [180, 1], [141, 2], [180, 1], [174, 1],
  [141, 4], [147, 1], [136, 1], [174, 1], [141, 3], [163, 1], [169, 1], [141, 1],
  [174, 1], [180, 1], [141, 3], [174, 1], [141, 2], [147, 1], [141, 3], [174, 1],
  [180, 1], [141, 2]
].flatMap(([value, count]) => Array(count).fill(value));

const chart = document.getElementById("cadence-chart");
const left = 48, right = 776, top0 = 20, height = 415;
const yOf = value => top0 + height * (1 - value / 240);

for (let value = 0; value <= 240; value += 48) {
  const y = yOf(value);
  add(chart, "line", { class: value ? "grid" : "grid base", x1: left, x2: right, y1: y, y2: y });
  add(chart, "text", { class: "label", x: 787, y: y + 6 }, String(value));
}
add(chart, "line", { class: "axis", x1: left, x2: left, y1: top0, y2: top0 + height });
add(chart, "line", { class: "axis", x1: right, x2: right, y1: top0, y2: top0 + height });
["0(分)", "3", "6", "9"].forEach((text, i) => {
  add(chart, "text", { class: i ? "label mid" : "label", x: left + i * 182, y: 470 }, text);
});
samples.forEach((value, i) => {
  const x = left + i * (right - left) / (samples.length - 1);
  const fill = value >= 185 ? "#00cf8a" : value > 150 ? "#ff9f05" : "#ff4161";
  add(chart, "ellipse", { cx: x, cy: yOf(value), rx: 5, ry: 5, fill });
});

/* dark modules per row */
const rows = [
  "8-9 11 14-15 18-19 21 23-24", "8 15 21 23 25-28", "8 11-14 18-19 22-24 26 28",
  "9-10 14-18 21-22 24-26", "9-18 20 24", "8-10 12 14-15 17 19 22 27-28",
  "8 10 12 14 16 18 20 22 24 26 28", "8-9 12-15 17-22 24 26 28",
  "2-4 6 8-9 12 14 16 19-20 29-31 34-36", "2 4-5 8 10-12 16-17 20 22-30",
  "2 6-7 9-10 15 17 22 25-26 30-31 33 35-36", "2 4-5 8-10 15 20-21 24 26 28 30 33",
  "0 3 5-6 8-11 19-21 25-26 28-30 32-35", "0 3 5 7-8 12 24-26 28-29 33-34",
  "1-2 5-6 8-10 24-28 31 33 35-36", "0 28 30-32", "1 6-9 25-26 30 32 34-35",
  "1 3-4 7-9 24-25 28 31 33-34", "0 3-6 9 12 25-29 33 35-36", "1-2 8-10 24 27 29 31 35",
  "0 3-4 6 9 24-26 29-34 36", "1 3-5 9 24-25 31 33", "1 3-4 6-7 9 11-12 24-27 29 34-36",
  "1-3 5 9 11 24-25 31 35-36", "1-2 6-9 11 15 20 23-24 26 28-29 32 34",
  "0 2 5-7 9-10 16-17 20 27 30-32 34", "0 4-6 10 12 15-18 20-25 28-32 35-36",
  "0 2 4-5 10-11 14 17-21 23 26-27 29 31-33 35-36", "0 2-4 6 9 12 14 17 19 21 23-33",
  "8 10-11 13 15-18 23-24 26 28 32", "10-20 22 26 28 30 32-33 36",
  "13 20 22-23 26 28 32 35", "8-9 11-12 14-16 20 23 25-29 31-32 34-35",
  "8 12 14 17-21 24-30 32 34", "8-9 11 16 18 20 22 26 29 31 33 36",
  "9-10 14 16-20 24 27-29 31-32 36", "9 12-17 19-20 24-26 31-32 34-36"
];
const qr = document.getElementById("qr");
const cell = (x, y, w, h, fill) => add(qr, "rect", { x: x * 10 + 11, y: y * 10 + 11, width: w * 10, height: h * 10, fill });
rows.forEach((row, y) => {
  row.split(" ").forEach(run => {
    const [from, to = from] = run.split("-").map(Number);
    cell(from, y, to - from + 1, 1, "#000");
  });
});
[[0, 0], [30, 0], [0, 30]].forEach(([x, y]) => {
  cell(x, y, 7, 7, "#000");
  cell(x + 1, y + 1, 5, 5, "#fff");
  cell(x + 2, y + 2, 3, 3, "#000");
});
add(qr, "rect", { x: 139, y: 139, width: 114, height: 114, rx: 12, fill: "#fff" });
add(qr, "circle", { cx: 196, cy: 196, r: 29, fill: "none", stroke: "#ff5429", "stroke-width": 15 });
```
